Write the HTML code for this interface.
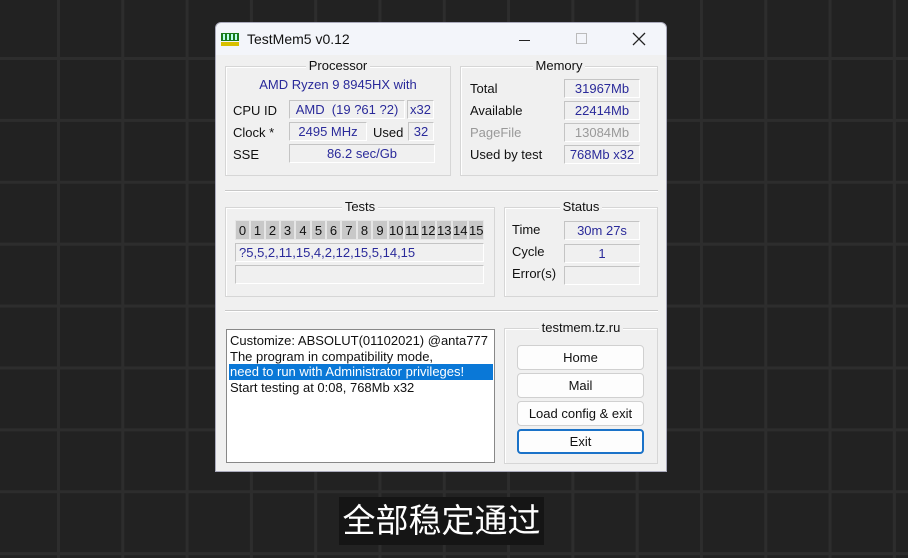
<!DOCTYPE html>
<html><head><meta charset="utf-8"><style>
*{margin:0;padding:0;box-sizing:border-box}
body{width:908px;height:558px;overflow:hidden;position:relative;background-color:#222;
background-image:linear-gradient(90deg,#2d2d2d 3px,transparent 3px),linear-gradient(0deg,#2d2d2d 3px,transparent 3px);
background-size:64.3px 61.9px;background-position:57px 60px;font-family:"Liberation Sans",sans-serif;font-size:13px;color:#111}
.a{position:absolute}
.win{left:215px;top:22px;width:452px;height:450px;background:#f0f0f0;border:1px solid #aab;border-radius:6px 6px 0 0}
.tb{left:0;top:0;width:450px;height:32px;background:#f3f5fa;border-radius:6px 6px 0 0}
.grp{position:absolute;border:1px solid #d6d6d6;box-shadow:inset 1px 1px 0 #fff}
.gt{position:absolute;top:-8px;left:0;right:0;text-align:center;line-height:14px}
.gt span{background:#f0f0f0;padding:0 3px}
.f{position:absolute;border:1px solid #c4c4c4;border-right-color:#fff;border-bottom-color:#fff;background:#f0f0f0;color:#2a2a9a;text-align:center;line-height:17px;font-size:13px}
.l{position:absolute;line-height:16px}
.tbx{position:absolute;top:219px;height:20px;background:#c8c8c8;border:1px solid #e6e6e6;text-align:center;line-height:19px;font-size:13px}
.btn{position:absolute;left:301px;width:127px;height:25px;background:#fdfdfd;border:1px solid #d0d0d0;border-radius:4px;text-align:center;line-height:23px}
</style></head><body>
<div class="a win">
 <div class="a tb"></div>
 <svg class="a" style="left:5px;top:10px" width="18" height="13"><rect x="0" y="0" width="18" height="8" fill="#1a7a1a"/><rect x="2" y="1" width="2" height="6" fill="#bfe"/><rect x="6" y="1" width="2" height="6" fill="#bfe"/><rect x="10" y="1" width="2" height="6" fill="#bfe"/><rect x="14" y="1" width="2" height="6" fill="#bfe"/><rect x="0" y="9" width="18" height="4" fill="#d8c000"/></svg>
 <div class="l" style="left:31px;top:8px;font-size:14px">TestMem5 v0.12</div>
 <div class="a" style="left:303px;top:17px;width:11px;height:1px;background:#222"></div>
 <div class="a" style="left:360px;top:10px;width:11px;height:11px;border:1px solid #bbb"></div>
 <svg class="a" style="left:416px;top:9px" width="14" height="14"><path d="M1 1L13 13M13 1L1 13" stroke="#222" stroke-width="1.3"/></svg>

 <div class="grp" style="left:9px;top:43px;width:226px;height:110px"><div class="gt"><span>Processor</span></div></div>
 <div class="l" style="left:9px;top:54px;width:226px;text-align:center;color:#2a2a9a">AMD Ryzen 9 8945HX with</div>
 <div class="l" style="left:17px;top:80px">CPU ID</div>
 <div class="f" style="left:73px;top:77px;width:116px;height:19px">AMD &nbsp;(19 ?61 ?2)</div>
 <div class="f" style="left:191px;top:77px;width:27px;height:19px">x32</div>
 <div class="l" style="left:17px;top:102px">Clock *</div>
 <div class="f" style="left:73px;top:99px;width:78px;height:19px">2495 MHz</div>
 <div class="l" style="left:157px;top:102px">Used</div>
 <div class="f" style="left:192px;top:99px;width:26px;height:19px">32</div>
 <div class="l" style="left:17px;top:124px">SSE</div>
 <div class="f" style="left:73px;top:121px;width:146px;height:19px">86.2 sec/Gb</div>

 <div class="grp" style="left:244px;top:43px;width:198px;height:110px"><div class="gt"><span>Memory</span></div></div>
 <div class="l" style="left:254px;top:58px">Total</div>
 <div class="l" style="left:254px;top:80px">Available</div>
 <div class="l" style="left:254px;top:102px;color:#999">PageFile</div>
 <div class="l" style="left:254px;top:124px">Used by test</div>
 <div class="f" style="left:348px;top:56px;width:76px;height:19px">31967Mb</div>
 <div class="f" style="left:348px;top:78px;width:76px;height:19px">22414Mb</div>
 <div class="f" style="left:348px;top:100px;width:76px;height:19px;color:#999">13084Mb</div>
 <div class="f" style="left:348px;top:122px;width:76px;height:19px">768Mb x32</div>

 <div class="a" style="left:9px;top:167px;width:433px;height:2px;border-top:1px solid #c8c8c8;border-bottom:1px solid #fff"></div>

 <div class="grp" style="left:9px;top:184px;width:270px;height:90px"><div class="gt"><span>Tests</span></div></div>
 <div class="tbx" style="left:19px;top:197px;width:15px">0</div>
 <div class="tbx" style="left:34px;top:197px;width:15px">1</div>
 <div class="tbx" style="left:49px;top:197px;width:15px">2</div>
 <div class="tbx" style="left:64px;top:197px;width:15px">3</div>
 <div class="tbx" style="left:79px;top:197px;width:16px">4</div>
 <div class="tbx" style="left:95px;top:197px;width:15px">5</div>
 <div class="tbx" style="left:110px;top:197px;width:15px">6</div>
 <div class="tbx" style="left:125px;top:197px;width:16px">7</div>
 <div class="tbx" style="left:141px;top:197px;width:15px">8</div>
 <div class="tbx" style="left:156px;top:197px;width:16px">9</div>
 <div class="tbx" style="left:172px;top:197px;width:16px">10</div>
 <div class="tbx" style="left:188px;top:197px;width:16px">11</div>
 <div class="tbx" style="left:204px;top:197px;width:16px">12</div>
 <div class="tbx" style="left:220px;top:197px;width:16px">13</div>
 <div class="tbx" style="left:236px;top:197px;width:16px">14</div>
 <div class="tbx" style="left:252px;top:197px;width:16px">15</div>
 <div class="f" style="left:19px;top:220px;width:249px;height:19px;text-align:left;padding-left:3px">?5,5,2,11,15,4,2,12,15,5,14,15</div>
 <div class="f" style="left:19px;top:242px;width:249px;height:19px"></div>

 <div class="grp" style="left:288px;top:184px;width:154px;height:90px"><div class="gt"><span>Status</span></div></div>
 <div class="l" style="left:296px;top:199px">Time</div>
 <div class="l" style="left:296px;top:221px">Cycle</div>
 <div class="l" style="left:296px;top:243px">Error(s)</div>
 <div class="f" style="left:348px;top:198px;width:76px;height:19px">30m 27s</div>
 <div class="f" style="left:348px;top:221px;width:76px;height:19px">1</div>
 <div class="f" style="left:348px;top:243px;width:76px;height:19px"></div>

 <div class="a" style="left:9px;top:287px;width:433px;height:2px;border-top:1px solid #c8c8c8;border-bottom:1px solid #fff"></div>

 <div class="a" style="left:10px;top:306px;width:269px;height:134px;background:#fff;border:1px solid #888"></div>
 <div class="l" style="left:14px;top:310px">Customize: ABSOLUT(01102021) @anta777</div>
 <div class="l" style="left:14px;top:326px">The program in compatibility mode,</div>
 <div class="a" style="left:13px;top:341px;width:264px;height:16px;background:#0a78d7"></div>
 <div class="l" style="left:14px;top:341px;color:#fff">need to run with Administrator privileges!</div>
 <div class="l" style="left:14px;top:357px">Start testing at 0:08, 768Mb x32</div>

 <div class="grp" style="left:288px;top:305px;width:154px;height:136px"><div class="gt"><span>testmem.tz.ru</span></div></div>
 <div class="btn" style="top:322px">Home</div>
 <div class="btn" style="top:350px">Mail</div>
 <div class="btn" style="top:378px">Load config &amp; exit</div>
 <div class="btn" style="top:406px;border:2px solid #1a72c8;line-height:21px">Exit</div>
</div>
<div class="a" style="left:339px;top:497px;width:205px;height:48px;background:#151515;color:#fff;font-family:'Liberation Sans','Noto Sans CJK SC',sans-serif;font-size:33px;line-height:48px;text-align:center">全部稳定通过</div>
</body></html>
